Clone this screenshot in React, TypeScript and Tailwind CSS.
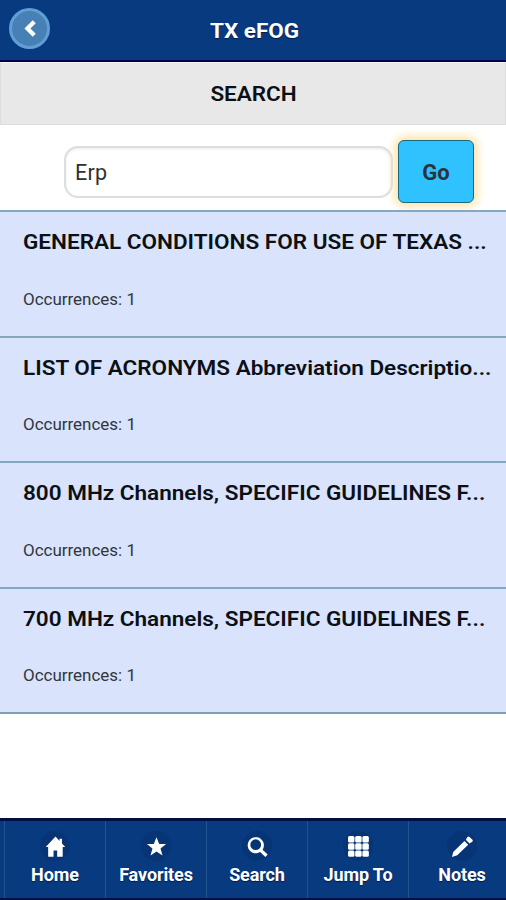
import type { ReactNode } from 'react';

const results = [
  'GENERAL CONDITIONS FOR USE OF TEXAS ...',
  'LIST OF ACRONYMS Abbreviation Descriptio...',
  '800 MHz Channels, SPECIFIC GUIDELINES F...',
  '700 MHz Channels, SPECIFIC GUIDELINES F...',
];

function Glyph({ children }: { children: ReactNode }) {
  return (
    <span className="flex size-[30px] items-center justify-center rounded-full bg-[#073475]">
      <svg viewBox="0 0 14 14" className="size-[21px]" fill="#fff">
        {children}
      </svg>
    </span>
  );
}

const tabs: { label: string; icon: ReactNode }[] = [
  { label: 'Home', icon: <path d="M7 .4.5 7.4h1.6v6.4h3.6V9.6h2.4v4.2h3.7V7.4h1.7L11.3 5V1.8H9.7v1.5z" /> },
  { label: 'Favorites', icon: <path d="M13.4 5.4 8.8 5.3 7 .8 5.2 5.3.6 5.4l3.7 3L3 13l4-2.7 4 2.7-1.3-4.6z" /> },
  {
    label: 'Search',
    icon: <path d="m13.8 12.4-3.4-3.3a5.4 5.4 0 1 0-1.6 1.6l3.4 3.3zM5.8 9.4a3.6 3.6 0 1 1 0-7.2 3.6 3.6 0 0 1 0 7.2z" />,
  },
  {
    label: 'Jump To',
    icon: (
      <>
        {[0, 4.8, 9.6].map((y) =>
          [0, 4.8, 9.6].map((x) => <rect key={`${x}-${y}`} x={x} y={y} width="4.3" height="4.3" rx="1" />),
        )}
      </>
    ),
  },
  {
    label: 'Notes',
    icon: <path d="M.8 10.6 0 14l3.5-1.1 7.3-7-2.5-2.5zM11.7.6a1 1 0 0 0-1.4 0L9.2 2.5l2.5 2.5 1.8-1.2a1 1 0 0 0 0-1.4z" />,
  },
];

export default function App() {
  return (
    <div className="flex h-[900px] w-[506px] flex-col overflow-hidden bg-white font-['Roboto','Liberation_Sans',sans-serif] text-[#0c1015]">
      <header className="grid h-[62px] shrink-0 grid-cols-[52px_1fr_52px] items-center border-b-2 border-[#000050] bg-[#083a80]">
        <button className="mb-[3px] ml-[9px] flex size-[41px] items-center justify-center rounded-full border-[3px] border-[#609fd5] bg-[#4680b5]">
          <svg viewBox="0 0 14 20" className="h-[17px] w-[12px]" fill="none" stroke="#fff" strokeWidth="5">
            <path d="m12 2-8 8 8 8" />
          </svg>
        </button>
        <h1 className="scale-x-[1.07] pt-px pl-[3px] text-center text-[21px] leading-[28px] font-bold text-white [text-shadow:0_1px_1px_#001a50]">
          TX eFOG
        </h1>
      </header>

      <div className="h-[63px] shrink-0 border border-t-[#f5f5f5] border-[#dddddd] bg-[#e8e8e8]">
        <h2 className="scale-x-[1.07] pl-px text-center text-[21px] leading-[62px] font-semibold">SEARCH</h2>
      </div>

      <div className="flex h-[85px] shrink-0 items-center pt-2 pl-[64px]">
        <input
          aria-label="Search"
          defaultValue="Erp"
          className="h-[52px] w-[329px] rounded-[14px] border-2 border-[#dedede] bg-white px-[9px] pt-[2px] text-[21.5px] tracking-[0.3px] text-[#303030] shadow-[inset_0_1px_3px_#e8e8e8] outline-none"
        />
        <button className="ml-[5px] h-[63px] w-[76px] rounded-[6px] border border-[#176a83] bg-[#30c2ff] pt-[2px] text-[22px] font-bold text-[#2b343a] shadow-[0_0_10px_3px_#ffdf9c]">
          Go
        </button>
      </div>

      <ul className="relative shrink-0 border-b-2 border-[#7b9fb5]">
        {results.map((title) => (
          <li key={title} className="h-[125.6px] border-t-2 border-[#83a8bf] bg-[#d9e3fb] pt-[15px] pl-[23px]">
            <h3 className="origin-left scale-x-[1.072] text-[21px] leading-[30px] font-semibold whitespace-nowrap">{title}</h3>
            <p className="mt-[31.5px] origin-left scale-x-[1.06] text-[16px] leading-[22px] text-[#303640]">Occurrences: 1</p>
          </li>
        ))}
      </ul>

      <nav className="mt-auto grid h-[82px] shrink-0 grid-cols-[101px_101px_101px_101px_107px] border-y-2 border-t-[3px] border-[#001044] bg-[#083a80] pl-[4px]">
        {tabs.map((tab) => (
          <a key={tab.label} className="flex flex-col items-center border-l border-[#23538b] pt-[10px]">
            <Glyph>{tab.icon}</Glyph>
            <span className="text-[18px] leading-[28px] font-bold tracking-[-0.1px] whitespace-nowrap text-white [text-shadow:0_1px_1px_#001a50]">
              {tab.label}
            </span>
          </a>
        ))}
      </nav>
    </div>
  );
}
